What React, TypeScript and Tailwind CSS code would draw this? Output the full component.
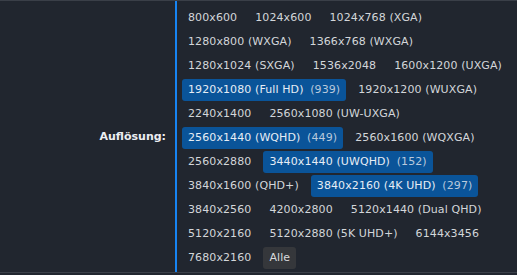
import React from "react";

type Item = { label: string; count?: number; active?: boolean; muted?: boolean };

const items: Item[] = [
  { label: "800x600" },
  { label: "1024x600" },
  { label: "1024x768 (XGA)" },
  { label: "1280x800 (WXGA)" },
  { label: "1366x768 (WXGA)" },
  { label: "1280x1024 (SXGA)" },
  { label: "1536x2048" },
  { label: "1600x1200 (UXGA)" },
  { label: "1920x1080 (Full HD)", count: 939, active: true },
  { label: "1920x1200 (WUXGA)" },
  { label: "2240x1400" },
  { label: "2560x1080 (UW-UXGA)" },
  { label: "2560x1440 (WQHD)", count: 449, active: true },
  { label: "2560x1600 (WQXGA)" },
  { label: "2560x2880" },
  { label: "3440x1440 (UWQHD)", count: 152, active: true },
  { label: "3840x1600 (QHD+)" },
  { label: "3840x2160 (4K UHD)", count: 297, active: true },
  { label: "3840x2560" },
  { label: "4200x2800" },
  { label: "5120x1440 (Dual QHD)" },
  { label: "5120x2160" },
  { label: "5120x2880 (5K UHD+)" },
  { label: "6144x3456" },
  { label: "7680x2160" },
  { label: "Alle", muted: true },
];

export default function App() {
  return (
    <div
      className="w-[517px] h-[275px] bg-[#21262f] overflow-hidden"
      style={{ fontFamily: '"DejaVu Sans", Verdana, sans-serif' }}
    >
      <div className="flex border-t border-b border-[#3a3f48]">
        <div className="w-[175px] shrink-0 flex items-center justify-end pr-[9px] pt-[2px] text-[11px] font-bold text-[#eceef1]">
          Auflösung:
        </div>
        <div className="flex-1 border-l-2 border-[#1784f2] pl-[5px] pr-[5px] pt-[6px] pb-[3px]">
          <div className="flex flex-wrap gap-x-[6px] gap-y-[2px]">
            {items.map((it) => (
              <span
                key={it.label}
                className={
                  "px-[6px] py-[4px] text-[11px] leading-[14px] tracking-[0.1px] rounded-[3px] whitespace-nowrap " +
                  (it.active
                    ? "bg-[#0a5499] text-[#e6edf5]"
                    : it.muted
                    ? "bg-[#35373b] text-[#d8dadd]"
                    : "text-[#d3d6da]")
                }
              >
                {it.label}
                {it.count !== undefined && (
                  <>
                    {" "}
                    <span className="ml-[3px] text-[#b9c9dc]">({it.count})</span>
                  </>
                )}
              </span>
            ))}
          </div>
        </div>
      </div>
    </div>
  );
}
